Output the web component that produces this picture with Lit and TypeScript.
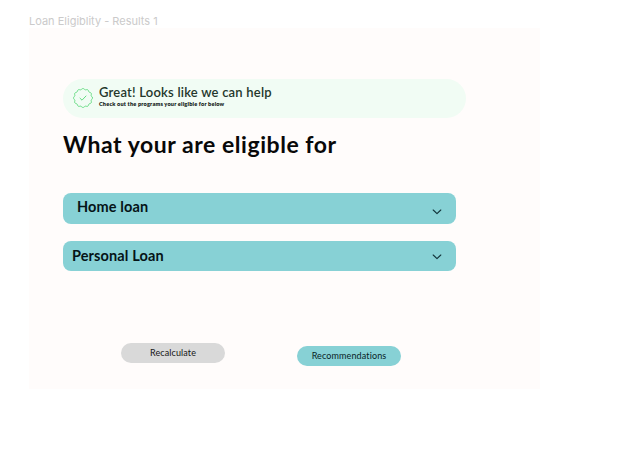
import { LitElement, html, css, svg } from "lit";
import { customElement, property } from "lit/decorators.js";

@customElement("loan-row")
class LoanRow extends LitElement {
  @property() label = "";
  static styles = css`
    :host {
      display: flex;
      box-sizing: border-box;
      justify-content: space-between;
      width: 393px;
      border-radius: 8px;
      background: #87d1d5;
      color: #051417;
    }
    .label {
      font: 700 14.5px/20px Lato, sans-serif;
      letter-spacing: 0.12px;
      white-space: nowrap;
    }
    .chevron {
      width: 10px;
      height: 6px;
      margin: var(--chevron-top, 13px) 14.5px 0 0;
    }
  `;
  render() {
    return html`<span class="label">${this.label}</span>
      <svg class="chevron" viewBox="0 0 10 6" fill="none" stroke="#12343a" stroke-width="1.1" stroke-linecap="round" stroke-linejoin="round">
        <path d="M1.2 1 5 4.7 8.8 1" />
      </svg>`;
  }
}

/* Outline of the scalloped badge: a circle with shallow waves. */
const badgePath = (() => {
  const points: string[] = [];
  for (let i = 0; i < 120; i++) {
    const a = (i / 120) * Math.PI * 2;
    const r = 9 + 0.5 * Math.cos(a * 12);
    points.push(`${(10 + r * Math.cos(a)).toFixed(2)} ${(10 + r * Math.sin(a)).toFixed(2)}`);
  }
  return `M${points.join("L")}Z`;
})();

@customElement("app-root")
class AppRoot extends LitElement {
  static styles = css`
    :host {
      display: block;
      box-sizing: border-box;
      width: 634px;
      height: 466px;
      padding: 14px 0 0 29px;
      overflow: hidden;
      background: #fff;
      font-family: Lato, sans-serif;
      color: #080808;
      white-space: nowrap;
    }
    .title {
      height: 14px;
      font: 400 11px/14px Inter, sans-serif;
      color: #cbcaca;
    }
    .frame {
      box-sizing: border-box;
      width: 511px;
      height: 361px;
      padding: 51px 0 0 34px;
      background: #fffcfb;
    }
    .banner {
      display: flex;
      box-sizing: border-box;
      width: 403px;
      height: 39px;
      padding: 5px 0 0 10px;
      gap: 6px;
      border-radius: 20px;
      background: #f1fcf4;
    }
    .badge {
      width: 20px;
      height: 20px;
      margin-top: 4px;
    }
    .great {
      font: 600 13px/16px Lato, sans-serif;
      letter-spacing: 0.21px;
      color: #24372b;
    }
    .note {
      font: 800 5.6px/8px Lato, sans-serif;
      letter-spacing: 0.17px;
      color: #14231a;
    }
    h1 {
      margin: 11px 0 33px;
      font: 700 23px/31px Lato, sans-serif;
      letter-spacing: 0.54px;
    }
    .home {
      height: 30.5px;
      padding: 4px 0 0 14px;
      --chevron-top: 12px;
    }
    .personal {
      height: 30px;
      margin-top: 17.5px;
      padding: 5px 0 0 9px;
      --chevron-top: 8px;
    }
    .actions {
      display: flex;
      gap: 72px;
      padding: 72px 0 0 58px;
    }
    button {
      width: 104px;
      height: 20px;
      padding: 0;
      border: 0;
      border-radius: 10px;
      background: #d9d9d9;
      font: 400 9px/20px Lato, sans-serif;
      letter-spacing: 0.12px;
      font-variant-ligatures: none;
      color: #161616;
    }
    .primary {
      margin-top: 3px;
      background: #87d1d5;
      color: #082225;
    }
  `;
  render() {
    return html`
      <div class="title">Loan Eligiblity - Results 1</div>
      <main class="frame">
        <section class="banner">
          <svg class="badge" viewBox="0 0 20 20" fill="none" stroke="#62dc80" stroke-width="1" stroke-linecap="round" stroke-linejoin="round">
            ${svg`<path d=${badgePath} />`}
            <path d="m7 10.2 2 2 4-4.2" />
          </svg>
          <div>
            <div class="great"><span>Great! Looks like we can help</span></div>
            <div class="note"><span>Check out the programs your eligible for below</span></div>
          </div>
        </section>
        <h1>What your are eligible for</h1>
        <loan-row class="home" label="Home loan"></loan-row>
        <loan-row class="personal" label="Personal Loan"></loan-row>
        <div class="actions">
          <button>Recalculate</button>
          <button class="primary">Recommendations</button>
        </div>
      </main>
    `;
  }
}
